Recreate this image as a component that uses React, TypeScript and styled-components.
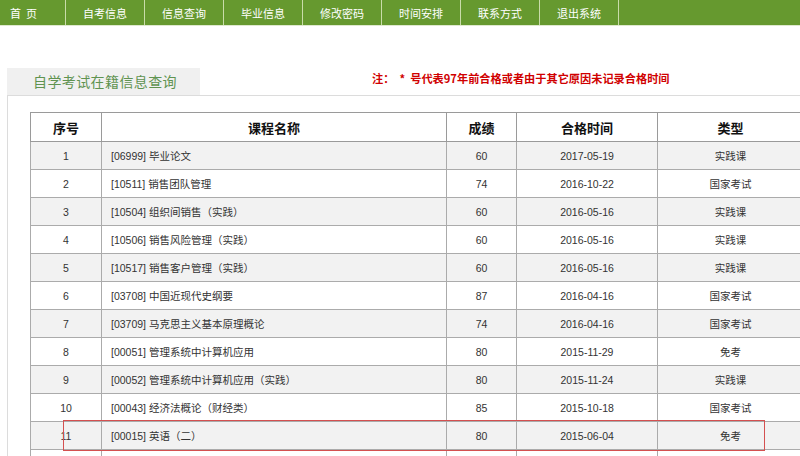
import React from "react";
import styled, { createGlobalStyle } from "styled-components";

const Global = createGlobalStyle`
  html, body { margin: 0; padding: 0; background: #fff; }
  body {
    width: 800px; height: 456px; overflow: hidden;
    font-family: "Liberation Sans", "Noto Sans CJK SC", sans-serif;
  }
`;

const Page = styled.div`
  position: relative;
  width: 800px;
  height: 456px;
  overflow: hidden;
`;

const Nav = styled.nav`
  display: flex;
  height: 25px;
  background: #66992f;
  border-bottom: 1px solid #dfe9cf;
`;

const NavItem = styled.a<{ $first?: boolean }>`
  display: flex;
  align-items: center;
  justify-content: ${(p) => (p.$first ? "flex-start" : "center")};
  box-sizing: border-box;
  width: ${(p) => (p.$first ? "66px" : "79px")};
  padding-left: ${(p) => (p.$first ? "10px" : "0")};
  border-right: 1px solid #c9dcaa;
  color: #fff;
  font-size: 11px;
  font-family: "Noto Sans CJK SC", sans-serif;
  text-decoration: none;
  white-space: pre;
`;

const Section = styled.section`
  margin: 42px 0 0 7px;
`;

const HeadRow = styled.div`
  display: flex;
  align-items: flex-start;
`;

const Tab = styled.div`
  width: 193px;
  height: 27px;
  line-height: 27px;
  box-sizing: border-box;
  padding-left: 26px;
  background: #f0f0f0;
  color: #5f9350;
  font-size: 14px;
  letter-spacing: 0.4px;
  font-family: "Noto Sans CJK SC", sans-serif;
`;

const Note = styled.div`
  margin-left: 172px;
  padding-top: 2px;
  color: #d00000;
  font-weight: bold;
  font-size: 11.2px;
  font-family: "Noto Sans CJK SC", sans-serif;
  white-space: pre;
`;

const Panel = styled.div`
  border-top: 1px solid #dcdcdc;
  border-left: 1px solid #dcdcdc;
  padding: 16px 0 0 22px;
  height: 400px;
`;

const Table = styled.table`
  border-collapse: collapse;
  width: 773px;
  table-layout: fixed;
  font-family: "Liberation Sans", "Noto Sans CJK SC", sans-serif;
`;

const Th = styled.th<{ $w: number }>`
  width: ${(p) => p.$w}px;
  height: 28px;
  padding: 0;
  border: 1px solid #9a9a9a;
  background: #fff;
  color: #111;
  font-size: 13px;
  font-weight: bold;
  font-family: "Noto Sans CJK SC", sans-serif;
  text-align: center;
`;

const Tr = styled.tr<{ $odd: boolean }>`
  background: ${(p) => (p.$odd ? "#f2f2f2" : "#fff")};
`;

const Td = styled.td<{ $left?: boolean }>`
  height: 27px;
  padding: 0 0 0 ${(p) => (p.$left ? "9px" : "0")};
  border: 1px solid #ababab;
  color: #333;
  font-size: 10.5px;
  text-align: ${(p) => (p.$left ? "left" : "center")};
  white-space: nowrap;
`;

const Mark = styled.div`
  position: absolute;
  left: 63px;
  top: 420px;
  width: 702px;
  height: 31px;
  border: 1px solid #d45050;
  box-sizing: border-box;
  pointer-events: none;
`;

const navItems = ["首  页", "自考信息", "信息查询", "毕业信息", "修改密码", "时间安排", "联系方式", "退出系统"];

const rows: [string, string, string, string][] = [
  ["[06999] 毕业论文", "60", "2017-05-19", "实践课"],
  ["[10511] 销售团队管理", "74", "2016-10-22", "国家考试"],
  ["[10504] 组织间销售（实践）", "60", "2016-05-16", "实践课"],
  ["[10506] 销售风险管理（实践）", "60", "2016-05-16", "实践课"],
  ["[10517] 销售客户管理（实践）", "60", "2016-05-16", "实践课"],
  ["[03708] 中国近现代史纲要", "87", "2016-04-16", "国家考试"],
  ["[03709] 马克思主义基本原理概论", "74", "2016-04-16", "国家考试"],
  ["[00051] 管理系统中计算机应用", "80", "2015-11-29", "免考"],
  ["[00052] 管理系统中计算机应用（实践）", "80", "2015-11-24", "实践课"],
  ["[00043] 经济法概论（财经类）", "85", "2015-10-18", "国家考试"],
  ["[00015] 英语（二）", "80", "2015-06-04", "免考"],
  ["", "", "", ""],
];

export default function App() {
  return (
    <Page>
      <Global />
      <Nav>
        {navItems.map((n, i) => (
          <NavItem key={n} $first={i === 0}>{n}</NavItem>
        ))}
      </Nav>
      <Section>
        <HeadRow>
          <Tab>自学考试在籍信息查询</Tab>
          <Note>注：  *  号代表97年前合格或者由于其它原因未记录合格时间</Note>
        </HeadRow>
        <Panel>
          <Table>
            <thead>
              <tr>
                <Th $w={70}>序号</Th>
                <Th $w={344}>课程名称</Th>
                <Th $w={69}>成绩</Th>
                <Th $w={140}>合格时间</Th>
                <Th $w={145}>类型</Th>
              </tr>
            </thead>
            <tbody>
              {rows.map((r, i) => (
                <Tr key={i} $odd={i % 2 === 0}>
                  <Td>{r[0] ? i + 1 : ""}</Td>
                  <Td $left>{r[0]}</Td>
                  <Td>{r[1]}</Td>
                  <Td>{r[2]}</Td>
                  <Td>{r[3]}</Td>
                </Tr>
              ))}
            </tbody>
          </Table>
        </Panel>
      </Section>
      <Mark />
    </Page>
  );
}
